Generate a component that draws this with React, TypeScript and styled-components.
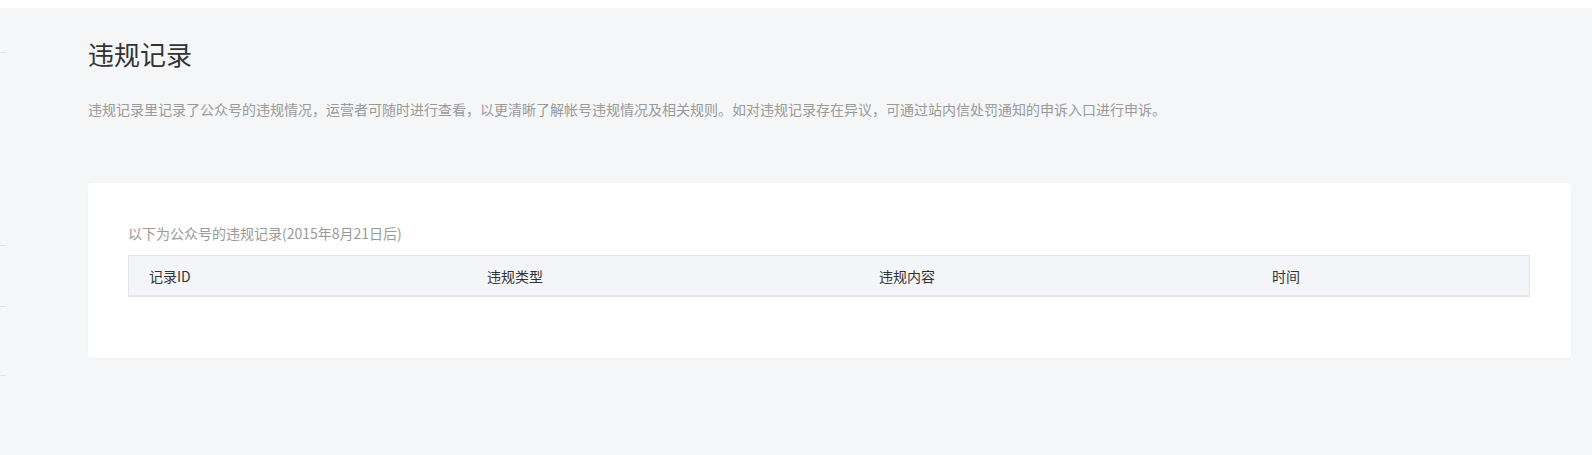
import styled, { createGlobalStyle } from "styled-components";

const GlobalStyle = createGlobalStyle`
  html, body {
    margin: 0;
    padding: 0;
    background: #f5f6f8;
  }
  body {
    font-family: "Noto Sans CJK SC", "Noto Sans", sans-serif;
    color: #333;
  }
`;

const Page = styled.div`
  min-height: 455px;
  background: #f5f6f8;
`;
const TopBar = styled.div`
  height: 8px;
  background: #fff;
`;
const Body = styled.div`
  display: flex;
  align-items: flex-start;
`;
const SideStub = styled.div`
  display: flex;
  flex-direction: column;
  width: 6px;
  flex-shrink: 0;
`;
const SideLine = styled.div<{ $gap: number }>`
  height: 1px;
  margin-top: ${(p) => p.$gap}px;
  background: #e3e5e9;
`;
const Main = styled.main`
  flex: 1;
  margin: 0 21px 0 82px;
  padding-top: 28px;
`;
const Title = styled.h2`
  margin: 0;
  font-size: 26px;
  line-height: 36px;
  font-weight: 400;
  color: #333;
`;
const Desc = styled.p`
  margin: 27px 0 0;
  font-size: 14px;
  line-height: 20px;
  color: #9a9a9a;
`;
const Card = styled.section`
  margin-top: 64px;
  background: #fff;
  border-radius: 4px;
  box-shadow: 0 1px 2px rgba(0, 0, 0, 0.03);
  padding: 40px 41px 61px 40px;
`;
const CardTip = styled.div`
  font-size: 14px;
  line-height: 20px;
  color: #9a9a9a;
  margin-bottom: 12px;
`;
const Table = styled.div`
  border: 1px solid #e4e5ea;
  border-bottom: 2px solid #e6e6eb;
`;
const HeadRow = styled.div`
  display: grid;
  grid-template-columns: 338px 392px 393px 1fr;
  height: 39px;
  align-items: center;
  background: #f4f5f9;
`;
const HeadCell = styled.div`
  padding-left: 20px;
  font-size: 14px;
  color: #333;
`;

const columns = ["记录ID", "违规类型", "违规内容", "时间"];

export default function App() {
  return (
    <Page>
      <GlobalStyle />
      <TopBar />
      <Body>
        <SideStub>
          <SideLine $gap={44} />
          <SideLine $gap={192} />
          <SideLine $gap={60} />
          <SideLine $gap={68} />
        </SideStub>
        <Main>
          <Title>违规记录</Title>
          <Desc>
            违规记录里记录了公众号的违规情况，运营者可随时进行查看，以更清晰了解帐号违规情况及相关规则。如对违规记录存在异议，可通过站内信处罚通知的申诉入口进行申诉。
          </Desc>
          <Card>
            <CardTip>以下为公众号的违规记录(2015年8月21日后)</CardTip>
            <Table>
              <HeadRow>
                {columns.map((c) => (
                  <HeadCell key={c}>{c}</HeadCell>
                ))}
              </HeadRow>
            </Table>
          </Card>
        </Main>
      </Body>
    </Page>
  );
}
